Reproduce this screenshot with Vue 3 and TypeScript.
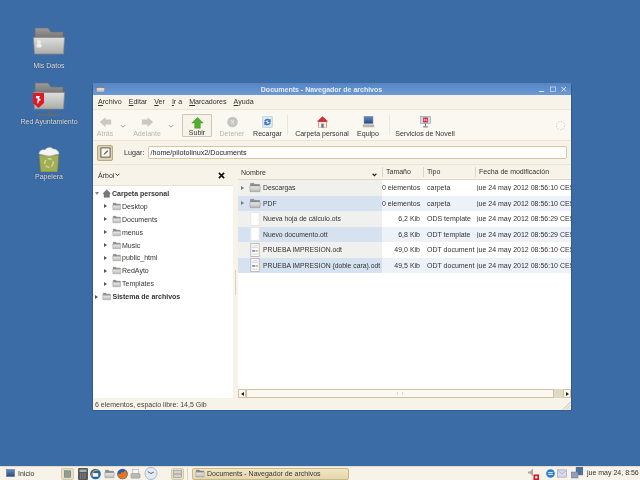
<script setup lang="ts">
const menus = [
  { k: 'A', r: 'rchivo' }, { k: 'E', r: 'ditar' }, { k: 'V', r: 'er' },
  { k: 'I', r: 'r a' }, { k: 'M', r: 'arcadores' }, { k: 'A', r: 'yuda' },
]
const tree = ['Desktop', 'Documents', 'menus', 'Music', 'public_html', 'RedAyto', 'Templates']
const files = [
  { name: 'Descargas', icon: 'folder', size: '0 elementos', type: 'carpeta', date: 'jue 24 may 2012 08:56:10 CEST', arrow: true },
  { name: 'PDF', icon: 'folder', size: '0 elementos', type: 'carpeta', date: 'jue 24 may 2012 08:56:10 CEST', arrow: true },
  { name: 'Nueva hoja de cálculo.ots', icon: 'blank', size: '6,2 Kib', type: 'ODS template', date: 'jue 24 may 2012 08:56:29 CEST', arrow: false },
  { name: 'Nuevo documento.ott', icon: 'blank', size: '6,8 Kib', type: 'ODT template', date: 'jue 24 may 2012 08:56:29 CEST', arrow: false },
  { name: 'PRUEBA IMPRESION.odt', icon: 'doc', size: '49,0 Kib', type: 'ODT document', date: 'jue 24 may 2012 08:56:10 CEST', arrow: false },
  { name: 'PRUEBA IMPRESION (doble cara).odt', icon: 'doc', size: '49,5 Kib', type: 'ODT document', date: 'jue 24 may 2012 08:56:10 CEST', arrow: false },
]
</script>

<template>
  <div class="screen">
    <svg class="defs" width="0" height="0">
      <defs>
        <linearGradient id="fg" x1="0" y1="0" x2="0" y2="1">
          <stop offset="0" stop-color="#ededeb" /><stop offset="1" stop-color="#b8b8b4" />
        </linearGradient>
        <linearGradient id="bigfront" x1="0" y1="0" x2="0" y2="1">
          <stop offset="0" stop-color="#dededc" /><stop offset="1" stop-color="#acacaa" />
        </linearGradient>
        <linearGradient id="tab" x1="0" y1="0" x2="0" y2="1">
          <stop offset="0" stop-color="#9c9c9a" /><stop offset="1" stop-color="#666668" />
        </linearGradient>
        <linearGradient id="bl" x1="0" y1="0" x2="0" y2="1">
          <stop offset="0" stop-color="#5f8ed0" /><stop offset="1" stop-color="#23477f" />
        </linearGradient>
        <symbol id="folder" viewBox="0 0 16 14">
          <path d="M2 1.500h4.500l1.500 1.500h6v3H2z" fill="#8c8c90" stroke="#66666a" stroke-width=".6" />
          <path d="M1 5h14l-.5 7.500h-13z" fill="url(#fg)" stroke="#88888a" stroke-width=".6" />
        </symbol>
        <symbol id="bigfolder" viewBox="0 0 32 28">
          <path d="M2 1h13l3 4h12v10H2z" fill="url(#tab)" stroke="#6e6e70" stroke-width=".7" />
          <path d="M.5 10.500h31l-1 16.500H1.500z" fill="url(#bigfront)" stroke="#8a8a88" stroke-width=".7" />
        </symbol>
        <symbol id="blank" viewBox="0 0 12 15">
          <rect x="1.500" y=".5" width="9" height="14" fill="#fff" stroke="#e6e6e6" />
        </symbol>
        <symbol id="doc" viewBox="0 0 12 15">
          <rect x="1.500" y=".5" width="9" height="14" fill="#fff" stroke="#b8b8b8" />
          <path d="M3 3h6M3 5h6" stroke="#d0d0d0" />
          <rect x="3" y="7.500" width="3" height="2" fill="#7a96e0" /><rect x="6.500" y="7.500" width="2.500" height="2" fill="#dcb464" />
          <path d="M3 12h6" stroke="#d0d0d0" />
        </symbol>
      </defs>
    </svg>

    <div class="desktop">
      <div class="dicon icon-a">
        <svg class="dfolder"><use href="#bigfolder" /><circle cx="6" cy="15" r="2" fill="#eeeeee" /><rect x="3.500" y="17" width="5" height="3.500" rx="1" fill="#eeeeee" /></svg>
        <span>Mis Datos</span>
      </div>
      <div class="dicon icon-b">
        <svg class="dnet" viewBox="0 0 32 35">
          <use href="#bigfolder" width="32" height="28" />
          <path d="M16 28v4" stroke="#666" stroke-width="2" />
          <path d="M5 33h22" stroke="#6a6a6a" stroke-width="1.500" />
          <path d="M0 11h11v10l-5.500 5L0 21z" fill="#e01a25" /><path d="M3 14h4l-1 2 2 2-2 1-1 3-1-2 1-3-2-1z" fill="#fff" />
        </svg>
        <span>Red Ayuntamiento</span>
      </div>
      <div class="dicon icon-c">
        <svg class="dtrash" viewBox="0 0 24 25">
          <path d="M2 8h20l-1.500 17h-17z" fill="#a2ae55" stroke="#6d7540" stroke-width=".7" />
          <path d="M2 7c0-3 3-5 6-4 2-3 6-3 8-1 3 0 6 2 6 5l-10 2z" fill="#f4f4f2" stroke="#b8b8b4" stroke-width=".5" />
          <circle cx="12" cy="16" r="4.200" fill="none" stroke="#cfd6a0" stroke-width="1.500" stroke-dasharray="4 2" />
        </svg>
        <span>Papelera</span>
      </div>

      <section class="window">
        <header class="titlebar">
          <svg class="title-icon"><use href="#folder" /></svg>
          <span class="title">Documents - Navegador de archivos</span>
          <div class="wm">
            <svg viewBox="0 0 8 8"><path d="M1 6.500h5" stroke="#dbe5f3" stroke-width="1" /></svg>
            <svg viewBox="0 0 8 8"><rect x="1.500" y="2" width="5" height="4.500" fill="none" stroke="#c9d8ec" stroke-width=".8" /></svg>
            <svg viewBox="0 0 8 8"><path d="M1.500 2l4.500 4.500m0-4.500L1.500 6.500" stroke="#dbe5f3" stroke-width="1" /></svg>
          </div>
        </header>

        <nav class="menubar">
          <span v-for="m in menus" :key="m.r" class="menu"><u>{{ m.k }}</u>{{ m.r }}</span>
        </nav>

        <div class="toolbar">
          <div class="tool dis w-atras">
            <svg viewBox="0 0 16 14"><path d="M1 7l7-6v3h7v6H8v3z" fill="#c9c9c4" /></svg><span>Atrás</span>
          </div>
          <svg class="chev chev-1" viewBox="0 0 8 6"><path d="M1 1l3 3 3-3" fill="none" stroke="#9b9b95" stroke-width="1.200" /></svg>
          <div class="tool dis w-adelante">
            <svg viewBox="0 0 16 14"><path d="M15 7L8 1v3H1v6h7v3z" fill="#c9c9c4" /></svg><span>Adelante</span>
          </div>
          <svg class="chev chev-2" viewBox="0 0 8 6"><path d="M1 1l3 3 3-3" fill="none" stroke="#9b9b95" stroke-width="1.200" /></svg>
          <div class="tool subir">
            <svg viewBox="0 0 16 14"><path d="M8 0l7 7h-3.500v6.500h-7V7H1z" fill="#4fae2c" stroke="#3a8a20" stroke-width=".5" /></svg><span>Subir</span>
          </div>
          <div class="tool dis w-detener">
            <svg viewBox="0 0 16 14"><circle cx="8" cy="7" r="6.500" fill="#c4c4c0" /><path d="M6 5l4 4m0-4l-4 4" stroke="#eee" stroke-width="1.300" /></svg><span>Detener</span>
          </div>
          <div class="tool w-recargar">
            <svg viewBox="0 0 16 14"><rect x="2" y="0" width="12" height="14" rx="1" fill="#dfe9f5" stroke="#8fa9cc" stroke-width=".5" /><path d="M4 6c0-3 5-4 7-2l1-1v4H8l1.500-1.500C8 4.500 6 5 5.500 7zM12 8c0 3-5 4-7 2l-1 1V7h4L6.500 8.500C8 9.500 10 9 10.500 7z" fill="#3f78c0" /></svg><span>Recargar</span>
          </div>
          <i class="sep sep-1"></i>
          <div class="tool w-carpeta">
            <svg viewBox="0 0 16 14"><path d="M8 0L1 6.500h2V14h10V6.500h2z" fill="#c33" /><rect x="3.500" y="7" width="9" height="7" fill="#eee" /><rect x="6.500" y="9" width="3" height="5" fill="#777" /></svg><span>Carpeta personal</span>
          </div>
          <div class="tool w-equipo">
            <svg viewBox="0 0 16 14"><rect x="2.500" y="0" width="11" height="9" fill="url(#bl)" stroke="#888" stroke-width=".7" /><rect x="1" y="10" width="14" height="3.500" fill="#b5b5b2" /></svg><span>Equipo</span>
          </div>
          <i class="sep sep-2"></i>
          <div class="tool w-novell">
            <svg viewBox="0 0 16 14"><rect x="2" y="0" width="12" height="9" fill="#cfd9e6" stroke="#8a98a8" stroke-width=".7" /><rect x="5" y="1.500" width="6" height="6" fill="#d8202a" /><path d="M6.500 6V3l3 3V3" fill="none" stroke="#fff" stroke-width=".8" /><path d="M8 9v3M5 13h6" stroke="#667" stroke-width="1.200" /></svg><span>Servicios de Novell</span>
          </div>
          <svg class="spinner" viewBox="0 0 12 12"><circle cx="6" cy="6" r="4.500" fill="none" stroke="#c8c8c2" stroke-dasharray="1.500 1.500" /></svg>
        </div>

        <div class="location">
          <div class="edit-btn">
            <svg viewBox="0 0 12 12"><rect x="1" y="1" width="10" height="10" fill="#f6f6f4" stroke="#444" stroke-width=".9" /><path d="M4 8.500l.5-1.500 3.500-3.500 1 1-3.500 3.500z" fill="#7a5a20" /></svg>
          </div>
          <label>Lugar:</label>
          <div class="entry">/home/pilotolinux2/Documents</div>
        </div>

        <div class="panes">
          <aside class="side">
            <div class="side-head">
              <span>Árbol</span>
              <svg class="sel-chev" viewBox="0 0 8 6"><path d="M1 1l3 3 3-3" fill="none" stroke="#222" stroke-width="1.500" /></svg>
              <svg class="close" viewBox="0 0 8 8"><path d="M1 1l6 6m0-6l-6 6" stroke="#111" stroke-width="1.800" /></svg>
            </div>
            <div class="tree">
              <div class="trow root">
                <i class="tri down"></i>
                <svg class="ti" viewBox="0 0 12 12"><path d="M6 1L1 6h1.500v5h7V6H11z" fill="#77777a" stroke="#444" stroke-width=".5" /></svg>
                <b>Carpeta personal</b>
              </div>
              <div v-for="t in tree" :key="t" class="trow child">
                <i class="tri"></i>
                <svg class="ti"><use href="#folder" /></svg>
                <span>{{ t }}</span>
              </div>
              <div class="trow root">
                <i class="tri"></i>
                <svg class="ti"><use href="#folder" /></svg>
                <b>Sistema de archivos</b>
              </div>
            </div>
          </aside>
          <div class="split"><i></i></div>
          <main class="list">
            <div class="thead">
              <div class="c-name">Nombre
                <svg class="sort" viewBox="0 0 8 6"><path d="M1 1l3 3 3-3" fill="none" stroke="#222" stroke-width="1.800" /></svg>
              </div>
              <div class="c-size hd">Tamaño</div>
              <div class="c-type hd">Tipo</div>
              <div class="c-date hd">Fecha de modificación</div>
            </div>
            <div class="rows">
              <div v-for="f in files" :key="f.name" class="row">
                <div class="c-name cell-name">
                  <i class="tri" :class="{ hidden: !f.arrow }"></i>
                  <svg class="fi" :class="f.icon"><use :href="'#' + f.icon" /></svg>
                  <span>{{ f.name }}</span>
                </div>
                <div class="c-size num">{{ f.size }}</div>
                <div class="c-type txt">{{ f.type }}</div>
                <div class="c-date dt">{{ f.date }}</div>
              </div>
            </div>
            <div class="hscroll">
              <div class="arrow"><i class="al"></i></div>
              <div class="thumb"><em></em></div>
              <div class="trough"></div>
              <div class="arrow"><i class="ar"></i></div>
            </div>
          </main>
        </div>

        <footer class="status">
          <span>6 elementos, espacio libre: 14,5 Gib</span>
          <svg class="grip" viewBox="0 0 9 9"><path d="M8.500 1L1 8.500M8.500 4L4 8.500M8.500 7L7 8.500" stroke="#c4c0b4" /></svg>
        </footer>
      </section>
    </div>

    <div class="panel">
      <div class="start">
        <svg viewBox="0 0 10 10"><rect x=".5" y=".5" width="9" height="8" fill="url(#bl)" stroke="#777" stroke-width=".7" /></svg>
        <span>Inicio</span>
      </div>
      <div class="launchers">
        <div class="pbtn"><svg viewBox="0 0 10 10"><rect x="1" y="1" width="8" height="8" fill="#8f9f90" stroke="#667" stroke-width=".6" /></svg></div>
        <svg class="lic calc" viewBox="0 0 10 12"><rect width="10" height="12" rx="1" fill="#55585a" /><rect x="1.500" y="1.500" width="7" height="2.500" fill="#a8adb0" /><path d="M2 6h6M2 8h6M2 10h6" stroke="#999" stroke-dasharray="1.200 1" /></svg>
        <svg class="lic tb" viewBox="0 0 12 12"><circle cx="6" cy="6" r="5.800" fill="#1f63ad" /><path d="M3 5h6v4H3z" fill="#f2f2ee" /><path d="M2 8c0-4 3-7 7-6" fill="none" stroke="#e8962c" stroke-width="1.400" /></svg>
        <svg class="lic fo"><use href="#folder" /></svg>
        <svg class="lic ff" viewBox="0 0 12 12"><circle cx="6" cy="6" r="5.800" fill="#2f5ba8" /><path d="M1 8c1 3 6 5 9 2 2-3 1-7-2-9 1 2 0 3-1 3-2 0-3 0-3 2-2-1-3 0-3 2z" fill="#e8741c" /></svg>
        <svg class="lic pr" viewBox="0 0 12 12"><rect x="3" y="1" width="6" height="5" fill="#f4f4f4" stroke="#999" stroke-width=".5" /><rect x="1" y="5.500" width="10" height="5" rx="1" fill="#b8b8b8" stroke="#8a8a8a" stroke-width=".5" /></svg>
        <svg class="lic cl" viewBox="0 0 14 14"><circle cx="7" cy="7" r="6.500" fill="#e4eaf4" stroke="#aab6cc" /><path d="M7 7L3.500 5M7 7l3-1.500" stroke="#555" /></svg>
      </div>
      <div class="pbtn show"><svg viewBox="0 0 12 10"><rect x=".5" y=".5" width="11" height="9" fill="#d4d2cc" stroke="#8b8b86" stroke-width=".7" /><path d="M1 5h10" stroke="#888" /></svg></div>
      <i class="handle"></i>
      <div class="task">
        <svg class="task-icon"><use href="#folder" /></svg>
        <span>Documents - Navegador de archivos</span>
      </div>
      <div class="tray">
        <svg class="vol" viewBox="0 0 12 12"><path d="M1 3.500h2l3-3v8L3 5.500H1z" fill="#a8a8a4" /><rect x="6.500" y="6.500" width="5.500" height="5.500" fill="#d8141c" /><rect x="8.200" y="8.200" width="2.200" height="2.200" fill="#fff" /></svg>
        <svg class="sync" viewBox="0 0 10 10"><circle cx="5" cy="5" r="4.800" fill="#2d7fd0" /><path d="M2.500 4h5M2.500 6h5" stroke="#fff" /></svg>
        <svg class="mail" viewBox="0 0 11 9"><rect x=".5" y=".5" width="10" height="8" fill="#d9d9ea" stroke="#9292b0" stroke-width=".6" /><path d="M1 1l4.500 4L10 1" fill="none" stroke="#9292b0" stroke-width=".6" /></svg>
        <svg class="net" viewBox="0 0 12 12"><rect x="5" y="0" width="7" height="8" fill="#4a70a4" stroke="#777" stroke-width=".4" /><rect x="0" y="5" width="7" height="6" fill="#8ba0bd" stroke="#666" stroke-width=".4" /></svg>
        <span class="clock">jue may 24, 8:56</span>
      </div>
    </div>
  </div>
</template>

<style>
html, body { margin: 0; padding: 0; overflow: hidden; }
</style>

<style scoped>
.screen {
  width: 640px; height: 480px; display: flex; flex-direction: column; overflow: hidden;
  background: #3b6ca5; font-family: "Liberation Sans", Arial, sans-serif; font-size: 7px; color: #333;
  filter: blur(.35px);
}
.defs { position: absolute; }
.desktop { flex: 1; position: relative; }
.dicon { position: absolute; left: 9px; width: 80px; display: flex; flex-direction: column; align-items: center; color: #dce3ec; font-size: 7px; line-height: 8px; text-shadow: 0 0 1px #223; }
.dfolder { width: 32px; height: 28px; margin-bottom: 7px; }
.dnet { width: 32px; height: 35px; margin-bottom: 1px; }
.dtrash { width: 24px; height: 25px; margin-bottom: 1px; }
.icon-a { top: 27px; }
.icon-b { top: 82px; }
.icon-c { top: 147px; }

.window {
  position: absolute; left: 92px; top: 83px; width: 480px; height: 328px; box-sizing: border-box;
  display: flex; flex-direction: column; background: #f7f3e9; border: 1px solid #2f5b90; border-top: 0; border-radius: 2px 2px 0 0;
}
.titlebar {
  height: 12px; flex: none; display: flex; align-items: center; padding: 0 3px;
  background: linear-gradient(#5784c2, #6c9ad6); color: #e6edf7; font-size: 7px; font-weight: bold;
}
.title-icon { width: 9px; height: 8px; }
.title { flex: 1; text-align: center; }
.wm { display: flex; gap: 3px; }
.wm svg { width: 8px; height: 8px; }

.menubar { height: 15px; flex: none; display: flex; align-items: center; padding: 0 5px; gap: 7px; background: #f7f3e9; border-bottom: 1px solid #ece5d4; box-sizing: border-box; font-size: 7.1px; color: #333; }
.toolbar { height: 31px; flex: none; display: flex; align-items: flex-start; padding: 4px 0 0 0; box-sizing: border-box; position: relative; background: #fbf8f1; border-bottom: 1px solid #ece5d4; }
.tool { height: 23px; box-sizing: border-box; display: flex; flex-direction: column; align-items: center; justify-content: space-between; padding: 2px 0 0; font-size: 7px; color: #333; flex: none; }
.tool svg { width: 13px; height: 12px; }
.tool.dis { color: #b8b6ae; }
.chev { width: 6px; height: 5px; margin-top: 10px; flex: none; }
.w-atras { width: 22px; margin-left: 1px; }
.chev-1 { margin-left: 4px; margin-right: 3px; }
.w-adelante { width: 36px; }
.chev-2 { margin-left: 3px; margin-right: 8px; }
.subir { width: 30px; border: 1px solid #cbc6b6; border-radius: 1px; background: #f7f3e9; }
.w-detener { width: 30px; margin-left: 5px; }
.w-recargar { width: 36px; margin-left: 2.500px; }
.sep { width: 1px; height: 20px; background: #ece6d8; margin-top: 1px; flex: none; }
.sep-1 { margin-left: 1.500px; }
.sep-2 { margin-left: 6px; }
.w-carpeta { width: 58px; margin-left: 5px; }
.w-equipo { width: 30px; margin-left: 2px; }
.w-novell { width: 66px; margin-left: 2px; }
.spinner { position: absolute; right: 5px; top: 10px; width: 11px; height: 11px; }

.location { height: 24px; flex: none; display: flex; align-items: center; background: #f7f3e9; border-bottom: 1px solid #ece5d4; box-sizing: border-box; padding: 0 4px; font-size: 7.200px; color: #333; }
.edit-btn { width: 16px; height: 16px; box-sizing: border-box; border: 1px solid #bba97f; border-radius: 2px; background: #dfd2b0; display: flex; align-items: center; justify-content: center; flex: none; margin-right: 11px; }
.edit-btn svg { width: 11px; height: 11px; }
.entry { flex: 1; margin-left: 4px; height: 13px; line-height: 11px; box-sizing: border-box; background: #fff; border: 1px solid #d3c7a8; border-radius: 2px; padding: 0 1px; color: #222; }

.panes { flex: 1; min-height: 0; display: flex; }
.side { width: 140px; flex: none; display: flex; flex-direction: column; }
.side-head { height: 21px; flex: none; display: flex; align-items: center; padding: 0 5px; background: #f7f3e9; font-size: 7px; box-sizing: border-box; border-bottom: 1px solid #e8e2d2; }
.sel-chev { width: 5px; height: 4px; margin-left: 1px; }
.close { width: 7px; height: 7px; margin-left: auto; margin-right: 3px; }
.tree { flex: 1; background: #fff; padding-top: 1px; }
.trow { height: 12.900px; display: flex; align-items: center; font-size: 7px; color: #333; white-space: nowrap; }
.root { padding-left: 2px; }
.child { padding-left: 11px; }
.tri { width: 0; height: 0; flex: none; border-left: 3.500px solid #555; border-top: 2.500px solid transparent; border-bottom: 2.500px solid transparent; }
.tri.down { border-left: 2.500px solid transparent; border-right: 2.500px solid transparent; border-top: 3.500px solid #888; border-bottom: 0; margin-right: -1.500px; }
.tri.hidden { visibility: hidden; }
.ti { width: 9.500px; height: 9px; margin: 0 .5px 0 5px; flex: none; }
.root .ti { margin-left: 4px; margin-right: 1px; }
.split { width: 5px; flex: none; position: relative; background: #f7f3e9; }
.split i { position: absolute; left: 2px; top: 105px; width: 1px; height: 25px; background: #d8d2c2; }
.list { flex: 1; min-width: 0; display: flex; flex-direction: column; background: #fff; overflow: hidden; }
.thead { height: 15px; flex: none; display: flex; align-items: center; background: #f7f3e9; border-bottom: 1px solid #e0d8c2; box-sizing: border-box; font-size: 7px; }
.c-name { width: 144px; flex: none; box-sizing: border-box; position: relative; display: flex; align-items: center; padding-left: 3px; white-space: nowrap; }
.c-size { width: 41px; flex: none; box-sizing: border-box; white-space: nowrap; }
.c-type { width: 52px; flex: none; box-sizing: border-box; white-space: nowrap; }
.c-date { flex: 1; min-width: 0; white-space: nowrap; overflow: hidden; }
.hd { border-left: 1px solid #dcd5c2; padding-left: 3px; height: 10px; line-height: 10px; }
.sort { position: absolute; right: 5px; top: 4px; width: 5px; height: 4px; }
.rows { flex: 1; }
.row { height: 15.500px; display: flex; align-items: center; font-size: 7px; color: #333; }
.row:nth-child(even) { background: #edf2f8; }
.cell-name { align-self: stretch; background: #f0f0ef; font-size: 6.800px; }
.row:nth-child(even) .cell-name { background: #d6e2ef; }
.fi { flex: none; margin: 0 2px 0 5px; }
.fi.folder { width: 12px; height: 11px; }
.fi.blank, .fi.doc { width: 12px; height: 14px; }
.cell-name .tri { border-left-color: #777; }
.num { text-align: right; padding-right: 3px; }
.txt { padding-left: 4px; }
.dt { padding-left: 2px; }
.hscroll { height: 9px; flex: none; display: flex; background: #e0d8c2; }
.arrow { width: 8px; flex: none; background: #fbf8f1; border: 1px solid #cdc2a2; box-sizing: border-box; border-radius: 1px; display: flex; align-items: center; justify-content: center; }
.al { width: 0; height: 0; border-right: 3px solid #222; border-top: 2px solid transparent; border-bottom: 2px solid transparent; }
.ar { width: 0; height: 0; border-left: 3px solid #222; border-top: 2px solid transparent; border-bottom: 2px solid transparent; }
.thumb { flex: 1; background: #fbf8f1; border: 1px solid #cdc2a2; box-sizing: border-box; display: flex; align-items: center; justify-content: center; }
.thumb em { width: 4px; height: 3px; border-left: 1px solid #ddd6c4; border-right: 1px solid #ddd6c4; }
.trough { width: 9px; flex: none; }
.status { height: 12px; flex: none; display: flex; align-items: center; padding-left: 2px; font-size: 7px; color: #444; background: #f7f3e9; position: relative; }
.grip { position: absolute; right: 0; bottom: 0; width: 9px; height: 9px; }

.panel { height: 14px; flex: none; display: flex; align-items: center; background: #f7f3e9; border-top: 1px solid #e4dcc8; box-sizing: border-box; font-size: 7px; color: #333; }
.start { display: flex; align-items: center; width: 61px; flex: none; padding-left: 6px; box-sizing: border-box; gap: 3px; }
.start svg { width: 9px; height: 9px; }
.launchers { display: flex; align-items: center; gap: 2px; width: 110px; flex: none; }
.pbtn { width: 13px; height: 12px; box-sizing: border-box; border: 1px solid #d8cca8; border-radius: 2px; background: #e6dfcb; display: flex; align-items: center; justify-content: center; flex: none; }
.pbtn svg { width: 9px; height: 8px; }
.lic { width: 11px; height: 12px; flex: none; }
.calc { width: 10px; margin-left: 2px; }
.fo { margin-left: 1px; }
.cl { width: 14px; height: 13px; margin-left: 1px; }
.handle { width: 1px; height: 12px; background: #dcd4bf; margin: 0 4px 0 3px; flex: none; }
.task { width: 157px; height: 12px; box-sizing: border-box; flex: none; display: flex; align-items: center; gap: 2px; padding-left: 2px; border: 1px solid #c8b98c; border-radius: 2px; background: linear-gradient(#f2e6c4, #e4d6ac); font-size: 7px; }
.task-icon { width: 10px; height: 9px; }
.tray { flex: 1; position: relative; height: 100%; }
.tray > * { position: absolute; }
.vol { left: 178px; top: 1px; width: 12px; height: 12px; }
.sync { left: 197px; top: 2px; width: 9px; height: 9px; }
.mail { left: 208px; top: 2px; width: 10px; height: 9px; }
.net { left: 222px; top: 0; width: 12px; height: 12px; }
.clock { left: 238px; top: 2px; white-space: nowrap; }
</style>
